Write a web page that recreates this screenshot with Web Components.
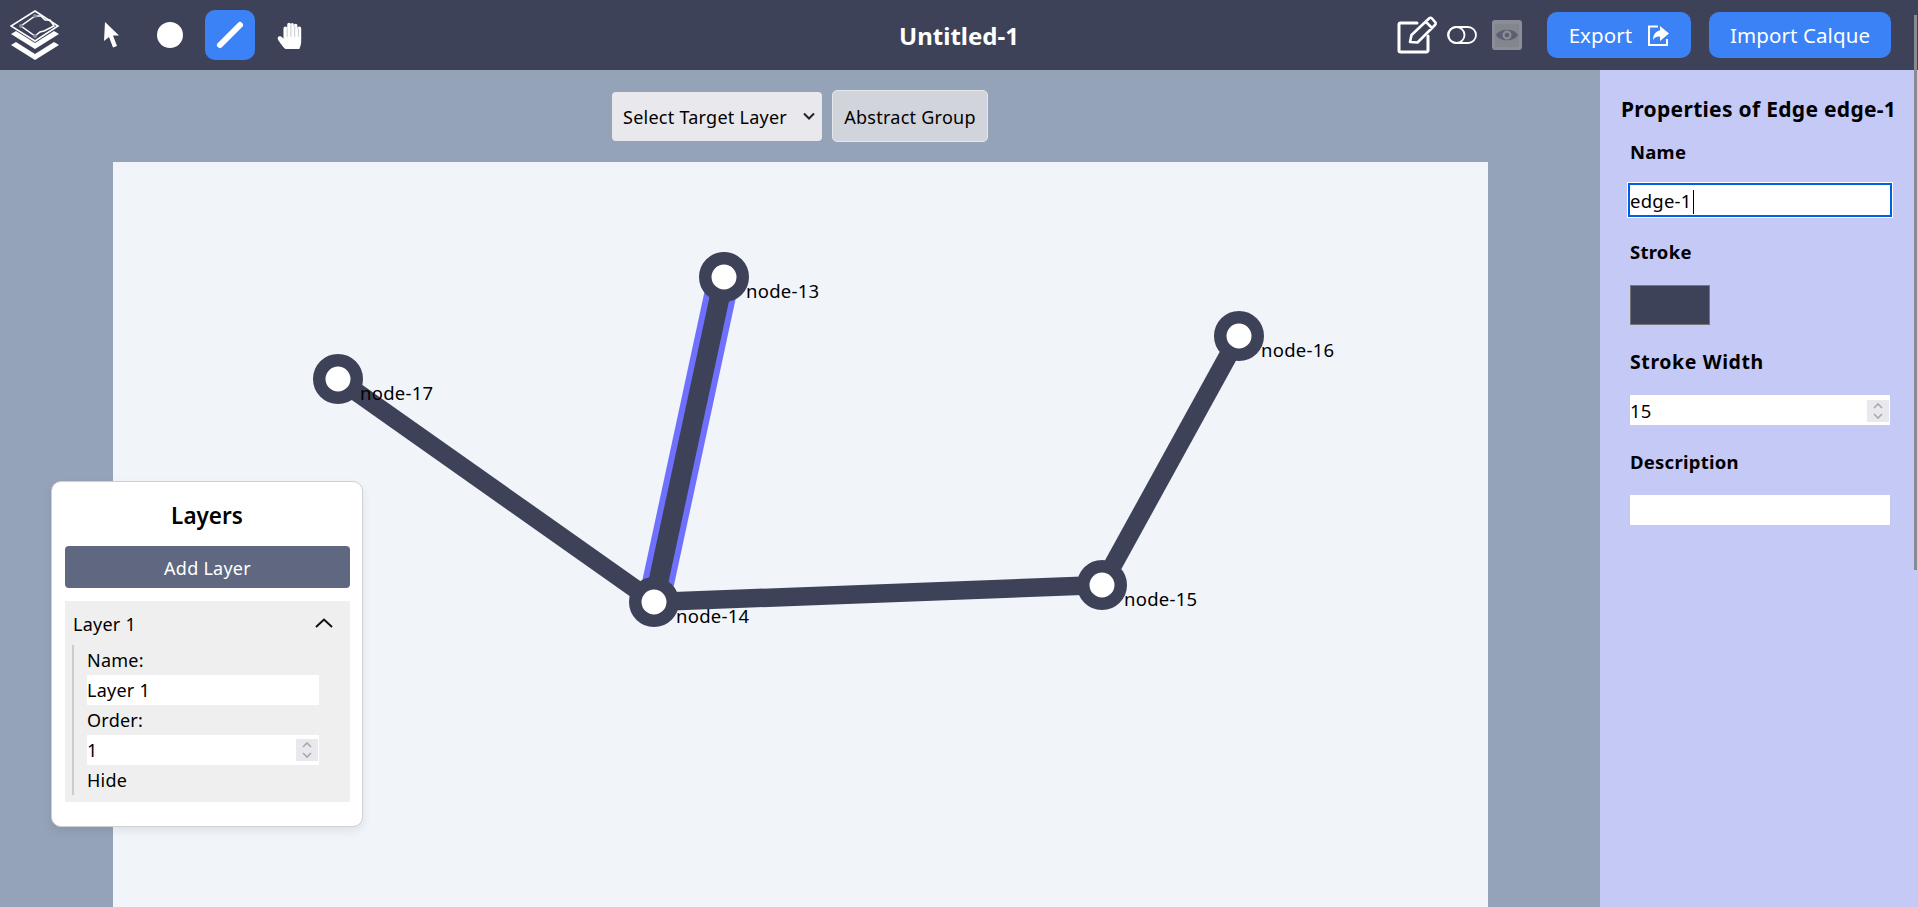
<!DOCTYPE html>
<html lang="en"><head><meta charset="utf-8"><title>Untitled-1</title>
<style>
html,body{margin:0;height:100%;overflow:hidden}
body{font-family:"Noto Sans","Open Sans","Liberation Sans",sans-serif;font-size:18px;letter-spacing:.25px;color:#000}
</style></head>
<body>
<app-shell>
  <app-header slot="top" title-text="Untitled-1"></app-header>
  <graph-workspace slot="main">
    <layers-panel slot="overlay"></layers-panel>
  </graph-workspace>
  <props-panel slot="side" edge="edge-1"></props-panel>
</app-shell>
<script>
function def(name, html, init){
  customElements.define(name, class extends HTMLElement{
    constructor(){super();this.attachShadow({mode:'open'}).innerHTML=html;}
    connectedCallback(){ if(init) init(this); }
  });
}
const spinner=`<svg width="22" height="22" viewBox="0 0 22 22" style="display:block;background:#e9e9ed"><path d="M7 8l4-4 4 4M7 14l4 4 4-4" fill="none" stroke="#aaa8b4" stroke-width="1.6"/></svg>`;

def('app-shell',`<style>
:host{display:grid;grid-template-rows:70px 837px;grid-template-columns:1600px 318px;width:1918px;height:907px;position:relative;overflow:hidden}
::slotted([slot=top]){grid-column:1/3}
.bar{position:absolute;left:1914px;top:15px;width:3px;height:555px;background:#8a8b92}
</style><slot name="top"></slot><slot name="main"></slot><slot name="side"></slot><div class="bar"></div>`);

def('tool-btn',`<style>
:host{display:flex;width:50px;height:50px;align-items:center;justify-content:center;border-radius:10px}
:host([active]){background:#3b82f6}
svg{display:block}
</style><slot></slot>`);

def('action-btn',`<style>
:host{display:flex;align-items:center;justify-content:center;gap:15px;height:46px;border-radius:10px;background:#3b82f6;color:#fff;font-size:20.5px;letter-spacing:.1px}
</style><slot></slot>`);

def('app-header',`<style>
:host{display:grid;grid-template-columns:1fr auto 1fr;align-items:center;background:#3e4259;height:70px;color:#fff}
.l,.r{display:flex;align-items:center}
.l{padding-left:10px}
.r{justify-content:flex-end;padding-right:27px}
.t{font-weight:700;font-size:24px;letter-spacing:0;white-space:nowrap}
svg{display:block}
.tools{display:flex;gap:10px;margin-left:25px;align-items:center}
</style>
<div class="l">
  <svg width="50" height="50" viewBox="10 10 50 50">
    <path d="M35 11L58 26 35 41 11 26Z" fill="none" stroke="#fff" stroke-width="1.6"/>
    <path d="M35 16H41L45 20H50L54 26 44 31 40 32 35 36 21 26Z" fill="none" stroke="#fff" stroke-width="1.5"/>
    <circle cx="35" cy="16" r="2" fill="#8d90a0"/><circle cx="21" cy="26" r="2" fill="#8d90a0"/><circle cx="35" cy="36" r="2" fill="#8d90a0"/>
    <path d="M11 34L16 31 35 43 54 31 59 34 35 49Z M11 45L16 42 35 54 54 42 59 45 35 60Z" fill="#fff"/>
  </svg>
  <div class="tools">
    <tool-btn><svg width="50" height="50" viewBox="85 10 50 50"><path d="M105 22L119 35.500 113 35.500 117 46 113 47.500 109 37 104 41Z" fill="#fff"/></svg></tool-btn>
    <tool-btn><svg width="26" height="26"><circle cx="13" cy="13" r="13" fill="#fff"/></svg></tool-btn>
    <tool-btn active><svg width="50" height="50"><line x1="15" y1="35" x2="35" y2="15" stroke="#fff" stroke-width="6" stroke-linecap="round"/></svg></tool-btn>
    <tool-btn><svg width="28" height="30" viewBox="0 0 30 32"><path d="M8 29C5 25 1 21 2 18.500 3 17 5 17 7 19L8 20V9a2 2 0 0 1 4 0V5a2 2 0 0 1 4 0V4a2 2 0 0 1 3 0V6a2 2 0 0 1 4 0V9a2 2 0 0 1 4 0V22C27 26 26 29 25 31H10Z" fill="#fff"/><path d="M12 9V18M16 5V18M20 6V18M24 9V18" stroke="#c3c4cc" stroke-width="1"/></svg></tool-btn>
  </div>
</div>
<div class="t" id="t"></div>
<div class="r">
  <svg width="40" height="38" viewBox="0 0 40 38" style="margin-right:10px"><path d="M20 7H3.500a1.500 1.500 0 0 0-1.500 1.500V34.500a1.500 1.500 0 0 0 1.500 1.500H29.500a1.500 1.500 0 0 0 1.500-1.500V20" fill="none" stroke="#fff" stroke-width="3" stroke-linecap="round"/><path d="M13 26L14.500 19 32 2.500a2 2 0 0 1 3 0L38 6a2 2 0 0 1 0 3L20.500 26.500Z M29 6L35 12" fill="none" stroke="#fff" stroke-width="2.600" stroke-linejoin="round"/></svg>
  <svg width="30" height="18" viewBox="0 0 30 18" style="margin-right:15px"><rect x="1" y="1" width="28" height="16" rx="8" fill="none" stroke="#fff" stroke-width="1.800"/><circle cx="9.500" cy="9" r="8" fill="none" stroke="#fff" stroke-width="1.800"/></svg>
  <svg width="30" height="30" viewBox="0 0 30 30" style="margin-right:25px"><rect width="30" height="30" rx="3" fill="#8b8d99"/><rect x="3" y="4" width="24" height="23" fill="#84868f"/><path d="M4 15C8 8 22 8 26 15 22 22 8 22 4 15Z" fill="#5c5f6f"/><circle cx="15" cy="15" r="4.500" fill="#8b8d99"/><circle cx="15" cy="15" r="2.300" fill="#5c5f6f"/></svg>
  <action-btn style="width:144px;margin-right:18px">Export <svg width="22" height="22" viewBox="0 0 22 22"><path d="M11 2.500H2v18.500h18v-6" fill="none" stroke="#fff" stroke-width="2"/><path d="M13 2l9 7.500-9 7.500v-4.500c-4 0-6 1-7 4 0-6 3-9.500 7-10Z" fill="#fff"/></svg></action-btn>
  <action-btn style="width:182px">Import Calque</action-btn>
</div>`, el=>{el.shadowRoot.getElementById('t').textContent=el.getAttribute('title-text');});

def('fake-select',`<style>
:host{display:flex;align-items:center;justify-content:space-between;box-sizing:border-box;width:210px;height:49px;padding:2px 6px 0 11px;background:#e9e9ed;border-radius:4px;white-space:nowrap}
</style><slot></slot><svg width="14" height="10" viewBox="0 0 14 10" style="margin-top:-2px"><path d="M2 2.500L7 7.500 12 2.500" fill="none" stroke="#222" stroke-width="2"/></svg>`);

def('graph-canvas',`<style>
:host{display:block;width:1375px;height:745px;background:#f1f5f9;margin-left:113px}
svg{display:block;overflow:visible}
text{font-family:"Noto Sans","Open Sans",sans-serif;font-size:18.500px;letter-spacing:.25px;fill:#000}
</style>
<svg width="1375" height="745" viewBox="113 162 1375 745" id="s"></svg>`, el=>{
  const s=el.shadowRoot.getElementById('s');
  const n={13:[724,277],14:[654,602],15:[1102,585],16:[1239,336],17:[338,379]};
  let h=`<line x1="654" y1="602" x2="724" y2="277" stroke="#7070ff" stroke-width="32"/>
  <line x1="654" y1="602" x2="724" y2="277" stroke="#3e4259" stroke-width="20"/>
  <g stroke="#3e4259" stroke-width="18.500"><line x1="338" y1="379" x2="654" y2="602"/><line x1="654" y1="602" x2="1102" y2="585"/><line x1="1102" y1="585" x2="1239" y2="336"/></g>`;
  for(const k in n){const [x,y]=n[k];
    h+=`<circle cx="${x}" cy="${y}" r="18.750" fill="#fff" stroke="#3e4259" stroke-width="12.500"/><text x="${x+22}" y="${y+21}">node-${k}</text>`;
  }
  s.innerHTML=h;
});

def('graph-workspace',`<style>
:host{display:flex;flex-direction:column;background:#94a3b8;position:relative;height:837px;overflow:hidden}
.tb{display:flex;justify-content:center;align-items:center;gap:10px;height:92px;padding:20px 0;box-sizing:border-box;flex:none}
button{all:unset;box-sizing:border-box;display:flex;align-items:center;justify-content:center;width:156px;height:52px;padding-top:2px;background:#d1d5db;border:1px solid #e5e7eb;border-radius:5px;font:inherit;letter-spacing:.25px;color:#000;white-space:nowrap}
graph-canvas{flex:none}
</style>
<div class="tb"><fake-select>Select Target Layer</fake-select><button>Abstract Group</button></div>
<graph-canvas></graph-canvas>
<slot name="overlay"></slot>`);

def('value-box',`<style>
:host{display:flex;align-items:center;justify-content:space-between;box-sizing:border-box;height:30px;background:#fff;white-space:nowrap;line-height:30px}
.sp{display:none;margin-right:1px}
:host([spin]) .sp{display:block}
</style><slot></slot><div class="sp">${spinner}</div>`);

def('layers-panel',`<style>
:host{position:absolute;left:51px;top:411px;box-sizing:border-box;width:312px;height:346px;background:#fff;border:1px solid #cfcfd4;border-radius:10px;box-shadow:0 4px 10px rgba(0,0,0,.08);padding:0 13px}
h2{margin:0;display:flex;align-items:center;justify-content:center;font-size:22.500px;font-weight:600;letter-spacing:0;padding-top:2px;box-sizing:border-box;height:64px}
button{all:unset;display:flex;box-sizing:border-box;align-items:center;justify-content:center;width:285px;height:42px;padding-top:2px;background:#5f6880;color:#fff;border-radius:4px;font:inherit;letter-spacing:.25px}
.item{margin-top:13px;background:#efefef;height:201px;width:285px;box-sizing:border-box;padding:0 0 0 7px}
.head{display:flex;justify-content:space-between;align-items:center;height:44px;padding-right:17px;padding-left:1px}
.head span{padding-top:2px}
.body{border-left:2px solid #ccc;padding-left:13px;width:232px;line-height:30px;height:150px}
svg{display:block}
</style>
<h2>Layers</h2>
<button>Add Layer</button>
<div class="item">
  <div class="head"><span>Layer 1</span><svg width="18" height="10" viewBox="0 0 18 10"><path d="M1 9L9 1.500 17 9" fill="none" stroke="#111" stroke-width="2"/></svg></div>
  <div class="body">
    <div>Name:</div><value-box>Layer 1</value-box>
    <div>Order:</div><value-box spin>1</value-box>
    <div>Hide</div>
  </div>
</div>`);

def('props-panel',`<style>
:host{display:block;background:#c4c9f6;height:837px;box-sizing:border-box;padding:24px 26px 0 21px}
h3{margin:0;font-size:21px;font-weight:700;letter-spacing:.3px;line-height:30px;white-space:nowrap}
.f{padding-left:9px;font-weight:700;line-height:30px;margin-top:22px}
.lab{height:30px;margin-bottom:18px;font-size:18.500px}
.v{font-weight:400;width:260px;padding-top:2px;font-size:18.500px}
.focus{outline:2px solid #0060df;box-shadow:0 0 0 3px #fff;height:30px;width:260px}
.caret{display:inline-block;width:1px;height:24px;background:#000;vertical-align:-6px;margin-left:1px}
.sw{box-sizing:border-box;width:80px;height:40px;background:#3e4259;border:1px solid #767676}
.first{margin-top:13px}
.wide{font-size:19.500px;letter-spacing:.6px}
</style>
<h3 id="h"></h3>
<div class="f first"><div class="lab">Name</div><value-box class="v focus" id="n"></value-box></div>
<div class="f"><div class="lab">Stroke</div><div class="sw"></div></div>
<div class="f"><div class="lab wide">Stroke Width</div><value-box class="v" spin>15</value-box></div>
<div class="f"><div class="lab">Description</div><value-box class="v"></value-box></div>`, el=>{
  const e=el.getAttribute('edge');
  el.shadowRoot.getElementById('h').textContent='Properties of Edge '+e;
  el.shadowRoot.getElementById('n').innerHTML='<span style="display:block">'+e+'<i class="caret"></i></span>';
});
</script>
</body></html>
